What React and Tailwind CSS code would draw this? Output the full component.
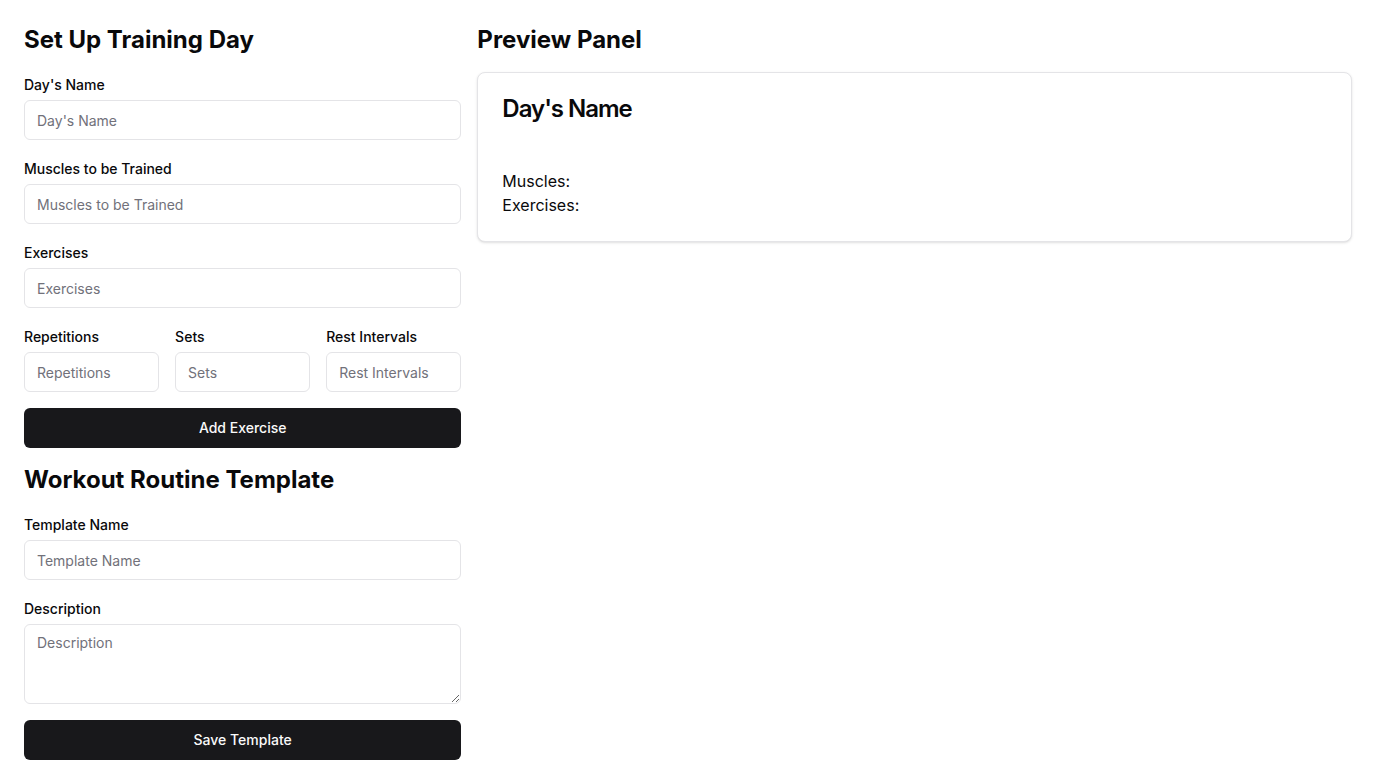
import React from "react";

const inputCls =
  "flex h-10 w-full rounded-md border border-[#e4e4e7] bg-white px-3 py-2 text-sm text-[#09090b] placeholder:text-[#71717a] outline-none";

function Field({ label, className = "mt-[22px]" }) {
  return (
    <div className={className}>
      <label className="mb-2 block text-sm font-medium leading-none text-[#09090b]">{label}</label>
      <input className={inputCls} placeholder={label} />
    </div>
  );
}

export default function App() {
  return (
    <div
      className="flex gap-4 bg-white p-6 text-[#09090b]"
      style={{ fontFamily: "Inter, 'Noto Sans', sans-serif" }}
    >
      <div className="min-w-0 flex-1">
        <h2 className="text-2xl font-bold leading-8">Set Up Training Day</h2>
        <Field label="Day's Name" />
        <Field label="Muscles to be Trained" />
        <Field label="Exercises" />
        <div className="mt-[22px] grid grid-cols-3 gap-4">
          <Field label="Repetitions" className="" />
          <Field label="Sets" className="" />
          <Field label="Rest Intervals" className="" />
        </div>
        <button className="mt-4 flex h-10 w-full items-center justify-center rounded-md bg-[#18181b] text-sm font-medium text-[#fafafa]">
          Add Exercise
        </button>
        <h2 className="mt-4 text-2xl font-bold leading-8">Workout Routine Template</h2>
        <Field label="Template Name" />
        <div className="mt-[22px]">
          <label className="mb-2 block text-sm font-medium leading-none text-[#09090b]">Description</label>
          <textarea
            className="block min-h-[80px] h-20 w-full rounded-md border border-[#e4e4e7] bg-white px-3 py-2 text-sm placeholder:text-[#71717a] outline-none"
            placeholder="Description"
          />
        </div>
        <button className="mt-4 flex h-10 w-full items-center justify-center rounded-md bg-[#18181b] text-sm font-medium text-[#fafafa]">
          Save Template
        </button>
      </div>
      <div className="min-w-0 flex-[2]">
        <h2 className="text-2xl font-bold leading-8">Preview Panel</h2>
        <div className="mt-4 rounded-lg border border-[#e4e4e7] bg-white p-6 shadow-sm">
          <h3 className="text-2xl font-semibold leading-none tracking-[-0.042em]">Day's Name</h3>
          <div className="mt-[48px] text-base leading-6">
            <p>Muscles: </p>
            <p>Exercises: </p>
          </div>
        </div>
      </div>
    </div>
  );
}
